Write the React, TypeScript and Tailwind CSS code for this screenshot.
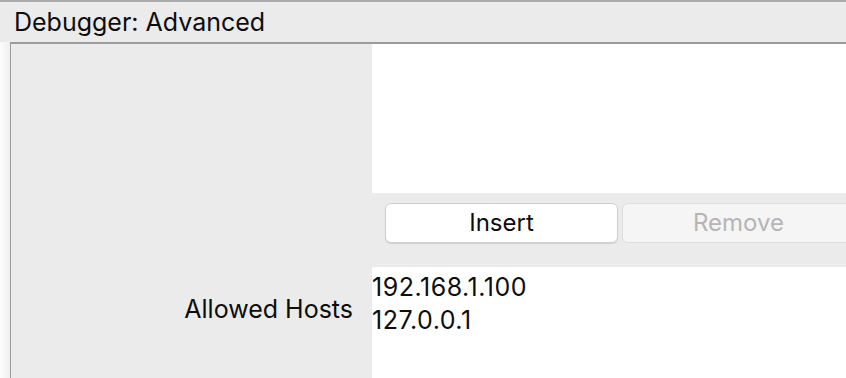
const font = { fontFamily: "Inter, 'Noto Sans', sans-serif" };

export default function App() {
  return (
    <div
      style={font}
      className="w-[846px] h-[378px] overflow-hidden bg-[#ebebeb] border-t-2 border-[#ababab] flex flex-col text-[#0d0d0d]"
    >
      <div className="h-[40px] pl-[14px] flex items-center text-[25px] leading-none">
        Debugger: Advanced
      </div>

      <div className="flex flex-1 min-h-0">
        <div className="w-[10px] bg-gradient-to-r from-[#fcfcfc] to-[#efefef]" />

        <div className="flex-1 flex flex-col border-t-2 border-l border-[#9c9c9c] min-w-0">
          <div className="flex h-[223px]">
            <div className="w-[361px]" />
            <div className="flex-1 flex flex-col min-w-0">
              <div className="h-[149px] bg-white" />
              <div className="flex-1 flex gap-[4px] pl-[13px] pt-[10px] overflow-hidden">
                <button className="w-[233px] h-[40px] shrink-0 rounded-[6px] bg-white border border-[#cfcfcf] shadow-[0_1px_1px_rgba(0,0,0,0.12)] text-[24px]">
                  Insert
                </button>
                <button
                  disabled
                  className="w-[233px] h-[40px] shrink-0 rounded-[6px] bg-[#f5f5f5] border border-[#dedede] text-[24px] text-[#b5b5b5]"
                >
                  Remove
                </button>
              </div>
            </div>
          </div>

          <div className="flex flex-1">
            <div className="w-[361px] flex justify-end pr-[19px] pt-[26px] text-[25px] leading-[33px]">
              Allowed Hosts
            </div>
            <div className="flex-1 bg-white pt-[4px] text-[25px] leading-[33px] tracking-[0.5px]">
              <div>192.168.1.100</div>
              <div>127.0.0.1</div>
            </div>
          </div>
        </div>
      </div>
    </div>
  );
}
